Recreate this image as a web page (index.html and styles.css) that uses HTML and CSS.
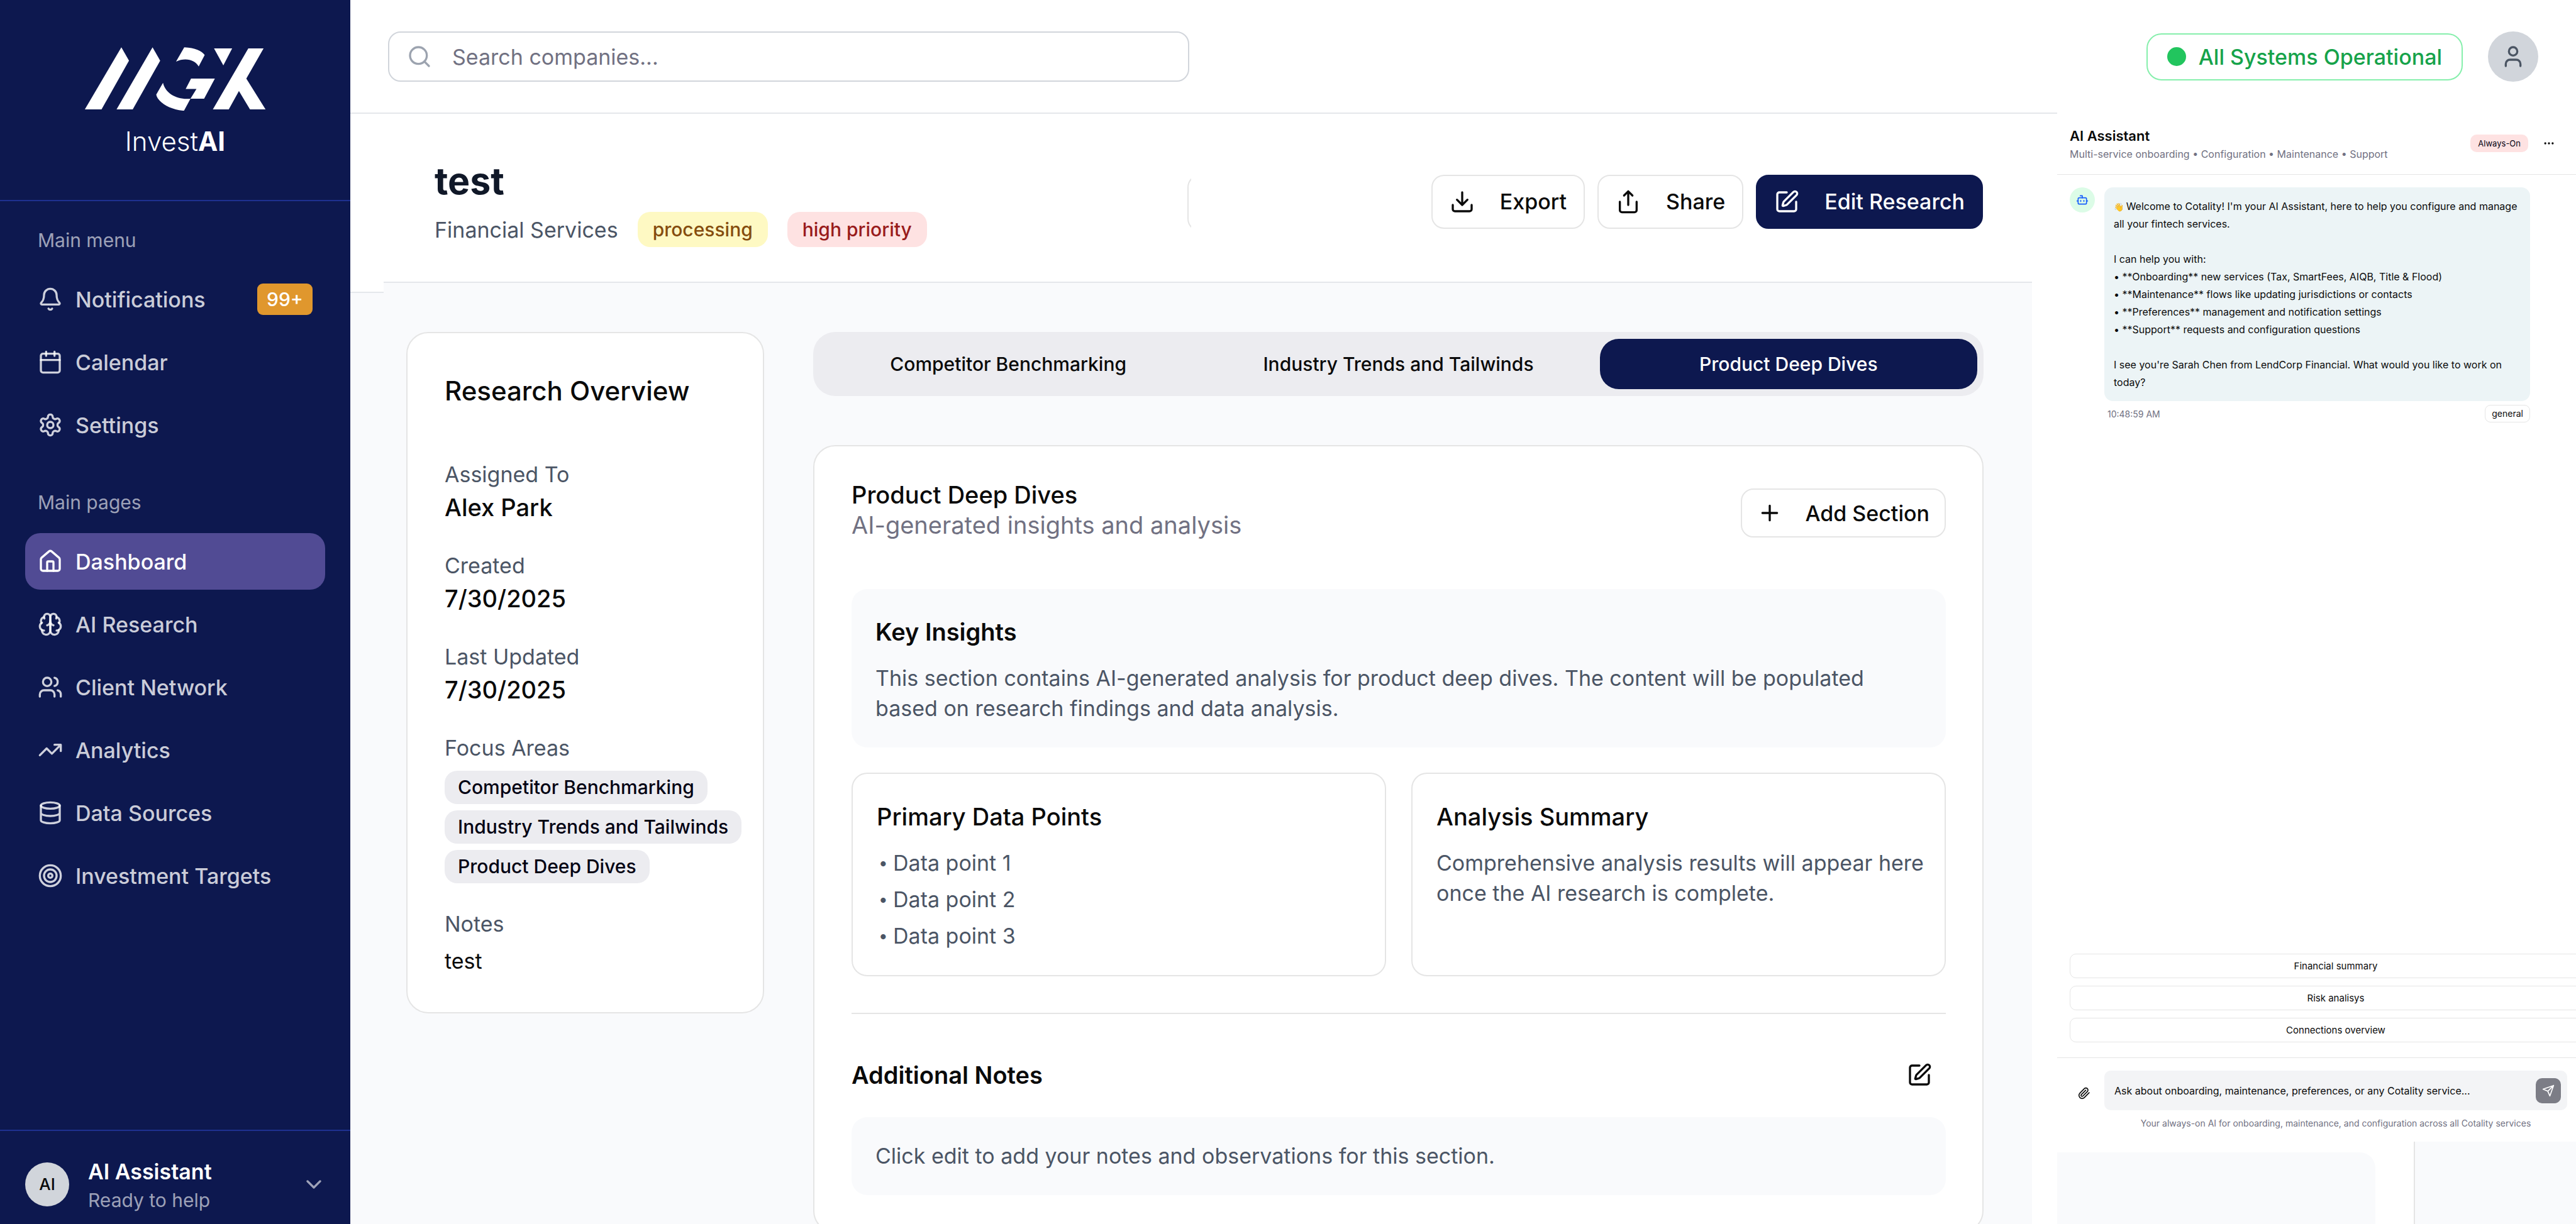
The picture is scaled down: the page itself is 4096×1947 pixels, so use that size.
FILE: index.html
```html
<!DOCTYPE html>
<html lang="en">
<head>
<meta charset="utf-8">
<title>InvestAI – Research</title>
<link rel="stylesheet" href="styles.css">
</head>
<body>
<svg class="sprite" aria-hidden="true">
  <symbol id="bell" viewBox="0 0 24 24"><path d="M10.268 21a2 2 0 0 0 3.464 0"/><path d="M3.262 15.326A1 1 0 0 0 4 17h16a1 1 0 0 0 .74-1.673C19.41 13.956 18 12.499 18 8A6 6 0 0 0 6 8c0 4.499-1.411 5.956-2.738 7.326"/></symbol>
  <symbol id="calendar" viewBox="0 0 24 24"><path d="M8 2v4M16 2v4M3 10h18"/><rect width="18" height="18" x="3" y="4" rx="2"/></symbol>
  <symbol id="settings" viewBox="0 0 24 24"><path d="M12.22 2h-.44a2 2 0 0 0-2 2v.18a2 2 0 0 1-1 1.73l-.43.25a2 2 0 0 1-2 0l-.15-.08a2 2 0 0 0-2.73.73l-.22.38a2 2 0 0 0 .73 2.73l.15.1a2 2 0 0 1 1 1.72v.51a2 2 0 0 1-1 1.74l-.15.09a2 2 0 0 0-.73 2.73l.22.38a2 2 0 0 0 2.73.73l.15-.08a2 2 0 0 1 2 0l.43.25a2 2 0 0 1 1 1.73V20a2 2 0 0 0 2 2h.44a2 2 0 0 0 2-2v-.18a2 2 0 0 1 1-1.73l.43-.25a2 2 0 0 1 2 0l.15.08a2 2 0 0 0 2.73-.73l.22-.39a2 2 0 0 0-.73-2.73l-.15-.08a2 2 0 0 1-1-1.74v-.5a2 2 0 0 1 1-1.74l.15-.09a2 2 0 0 0 .73-2.73l-.22-.38a2 2 0 0 0-2.73-.73l-.15.08a2 2 0 0 1-2 0l-.43-.25a2 2 0 0 1-1-1.73V4a2 2 0 0 0-2-2z"/><circle cx="12" cy="12" r="3"/></symbol>
  <symbol id="house" viewBox="0 0 24 24"><path d="M15 21v-8a1 1 0 0 0-1-1h-4a1 1 0 0 0-1 1v8"/><path d="M3 10a2 2 0 0 1 .709-1.528l7-5.999a2 2 0 0 1 2.582 0l7 5.999A2 2 0 0 1 21 10v9a2 2 0 0 1-2 2H5a2 2 0 0 1-2-2z"/></symbol>
  <symbol id="brain" viewBox="0 0 24 24"><path d="M12 5a3 3 0 1 0-5.997.125 4 4 0 0 0-2.526 5.77 4 4 0 0 0 .556 6.588A4 4 0 1 0 12 18Z"/><path d="M12 5a3 3 0 1 1 5.997.125 4 4 0 0 1 2.526 5.77 4 4 0 0 1-.556 6.588A4 4 0 1 1 12 18Z"/><path d="M15 13a4.5 4.5 0 0 1-3-4 4.5 4.5 0 0 1-3 4M17.599 6.5a3 3 0 0 0 .399-1.375M6.003 5.125A3 3 0 0 0 6.401 6.5M3.477 10.896a4 4 0 0 1 .585-.396M19.938 10.5a4 4 0 0 1 .585.396M6 18a4 4 0 0 1-1.967-.516M19.967 17.484A4 4 0 0 1 18 18"/></symbol>
  <symbol id="users" viewBox="0 0 24 24"><path d="M16 21v-2a4 4 0 0 0-4-4H6a4 4 0 0 0-4 4v2"/><circle cx="9" cy="7" r="4"/><path d="M22 21v-2a4 4 0 0 0-3-3.87M16 3.13a4 4 0 0 1 0 7.75"/></symbol>
  <symbol id="trend" viewBox="0 0 24 24"><path d="M22 7l-8.5 8.5-5-5L2 17M16 7h6v6"/></symbol>
  <symbol id="database" viewBox="0 0 24 24"><ellipse cx="12" cy="5" rx="9" ry="3"/><path d="M3 5V19A9 3 0 0 0 21 19V5M3 12A9 3 0 0 0 21 12"/></symbol>
  <symbol id="target" viewBox="0 0 24 24"><circle cx="12" cy="12" r="10"/><circle cx="12" cy="12" r="6"/><circle cx="12" cy="12" r="2"/></symbol>
  <symbol id="chevron" viewBox="0 0 24 24"><path d="m6 9 6 6 6-6"/></symbol>
  <symbol id="search" viewBox="0 0 24 24"><circle cx="11" cy="11" r="8"/><path d="m21 21-4.3-4.3"/></symbol>
  <symbol id="user" viewBox="0 0 24 24"><path d="M19 21v-2a4 4 0 0 0-4-4H9a4 4 0 0 0-4 4v2"/><circle cx="12" cy="7" r="4"/></symbol>
  <symbol id="download" viewBox="0 0 24 24"><path d="M21 15v4a2 2 0 0 1-2 2H5a2 2 0 0 1-2-2v-4M7 10l5 5 5-5M12 15V3"/></symbol>
  <symbol id="share" viewBox="0 0 24 24"><path d="M4 12v8a2 2 0 0 0 2 2h12a2 2 0 0 0 2-2v-8M16 6l-4-4-4 4M12 2v13"/></symbol>
  <symbol id="pen" viewBox="0 0 24 24"><path d="M12 3H5a2 2 0 0 0-2 2v14a2 2 0 0 0 2 2h14a2 2 0 0 0 2-2v-7"/><path d="M18.375 2.625a1 1 0 0 1 3 3l-9.013 9.014a2 2 0 0 1-.853.505l-2.873.84a.5.5 0 0 1-.62-.62l.84-2.873a2 2 0 0 1 .506-.852z"/></symbol>
  <symbol id="plus" viewBox="0 0 24 24"><path d="M5 12h14M12 5v14"/></symbol>
  <symbol id="more" viewBox="0 0 24 24"><circle cx="12" cy="12" r="1"/><circle cx="19" cy="12" r="1"/><circle cx="5" cy="12" r="1"/></symbol>
  <symbol id="bot" viewBox="0 0 24 24"><path d="M12 8V4H8"/><rect width="16" height="12" x="4" y="8" rx="2"/><path d="M2 14h2M20 14h2M15 13v2M9 13v2"/></symbol>
  <symbol id="clip" viewBox="0 0 24 24"><path d="m21.44 11.05-9.19 9.19a6 6 0 0 1-8.49-8.49l8.57-8.57A4 4 0 1 1 18 8.84l-8.59 8.57a2 2 0 0 1-2.83-2.83l8.49-8.48"/></symbol>
  <symbol id="send" viewBox="0 0 24 24"><path d="m22 2-7 20-4-9-9-4ZM22 2 11 13"/></symbol>
</svg>

<div class="app">
  <aside class="sidebar">
    <div class="brand">
      <svg class="brand-mark" viewBox="188 105 407 143" role="img" aria-label="MGX">
        <path d="M270.4 105.4 287.6 135.3 225.8 245H188.2Z"/>
        <path d="M340.6 105.4 357.8 135.3 296 245H259.6Z"/>
        <path d="M412 105.4C436 106 452 114 458 122.8L444.5 148.6C436 133 414 128 393.5 137.5Z"/>
        <path d="M364.2 185.3C370 210 396 224 426 221L411.4 248.2C378 246 352 228 348.9 212Z"/>
        <path d="M427.3 175.9H480.9L456.7 221H426L439.5 199H415.2Z"/>
        <path d="M479 108H519.8L500 146Z"/>
        <path d="M556.2 108H590.6L551.7 175.9 595 245H560L535.1 203.6 512.2 245H476.4Z"/>
      </svg>
      <div class="brand-name">Invest<b>AI</b></div>
    </div>
    <nav class="nav">
      <h2 class="nav-label">Main menu</h2>
      <a class="nav-item" href="#"><svg class="icon"><use href="#bell"/></svg>Notifications<span class="count">99+</span></a>
      <a class="nav-item" href="#"><svg class="icon"><use href="#calendar"/></svg>Calendar</a>
      <a class="nav-item" href="#"><svg class="icon"><use href="#settings"/></svg>Settings</a>
      <h2 class="nav-label nav-label-next">Main pages</h2>
      <a class="nav-item nav-active" href="#"><svg class="icon"><use href="#house"/></svg>Dashboard</a>
      <a class="nav-item" href="#"><svg class="icon"><use href="#brain"/></svg>AI Research</a>
      <a class="nav-item" href="#"><svg class="icon"><use href="#users"/></svg>Client Network</a>
      <a class="nav-item" href="#"><svg class="icon"><use href="#trend"/></svg>Analytics</a>
      <a class="nav-item" href="#"><svg class="icon"><use href="#database"/></svg>Data Sources</a>
      <a class="nav-item" href="#"><svg class="icon"><use href="#target"/></svg>Investment Targets</a>
    </nav>
    <div class="account">
      <span class="account-avatar">AI</span>
      <div class="account-text"><div class="account-name">AI Assistant</div><div class="account-status">Ready to help</div></div>
      <svg class="icon account-chevron"><use href="#chevron"/></svg>
    </div>
  </aside>

  <div class="content">
    <header class="topbar">
      <label class="search"><svg class="icon"><use href="#search"/></svg><input type="search" placeholder="Search companies..." aria-label="Search companies"></label>
      <div class="status"><span class="status-dot"></span>All Systems Operational</div>
      <button class="profile" aria-label="Profile"><svg class="icon"><use href="#user"/></svg></button>
    </header>

    <div class="workspace">
      <div class="gutter"><div class="gutter-head"></div></div>

      <main class="page">
        <header class="page-head">
          <div class="page-intro">
            <h1 class="page-title">test</h1>
            <div class="page-meta"><span>Financial Services</span><span class="tag tag-processing">processing</span><span class="tag tag-high">high priority</span></div>
          </div>
          <div class="sliver"></div>
          <div class="page-actions">
            <button class="button"><svg class="icon"><use href="#download"/></svg>Export</button>
            <button class="button"><svg class="icon"><use href="#share"/></svg>Share</button>
            <button class="button button-primary"><svg class="icon"><use href="#pen"/></svg>Edit Research</button>
          </div>
        </header>

        <div class="page-body">
          <section class="overview">
            <h2 class="overview-title">Research Overview</h2>
            <dl class="facts">
              <div><dt>Assigned To</dt><dd>Alex Park</dd></div>
              <div><dt>Created</dt><dd>7/30/2025</dd></div>
              <div><dt>Last Updated</dt><dd>7/30/2025</dd></div>
              <div><dt>Focus Areas</dt><dd class="focus"><span class="chip">Competitor Benchmarking</span><span class="chip">Industry Trends and Tailwinds</span><span class="chip">Product Deep Dives</span></dd></div>
              <div><dt>Notes</dt><dd class="fact-note">test</dd></div>
            </dl>
          </section>

          <div class="detail">
            <div class="tabs" role="tablist">
              <button class="tab" role="tab">Competitor Benchmarking</button>
              <button class="tab" role="tab">Industry Trends and Tailwinds</button>
              <button class="tab tab-active" role="tab" aria-selected="true">Product Deep Dives</button>
            </div>

            <section class="report">
              <div class="report-head">
                <div class="report-heading"><h2 class="report-title">Product Deep Dives</h2><p class="report-sub">AI-generated insights and analysis</p></div>
                <button class="button button-small"><svg class="icon"><use href="#plus"/></svg>Add Section</button>
              </div>
              <div class="panel">
                <h3 class="heading heading-strong">Key Insights</h3>
                <p class="copy">This section contains AI-generated analysis for product deep dives. The content will be populated based on research findings and data analysis.</p>
              </div>
              <div class="pair">
                <div class="box">
                  <h3 class="heading">Primary Data Points</h3>
                  <ul class="points">
                    <li><span class="bullet">•</span>Data point 1</li>
                    <li><span class="bullet">•</span>Data point 2</li>
                    <li><span class="bullet">•</span>Data point 3</li>
                  </ul>
                </div>
                <div class="box">
                  <h3 class="heading">Analysis Summary</h3>
                  <p class="copy">Comprehensive analysis results will appear here once the AI research is complete.</p>
                </div>
              </div>
              <hr class="rule">
              <div class="notes-head"><h3 class="heading heading-strong">Additional Notes</h3><button class="icon-button" aria-label="Edit notes"><svg class="icon"><use href="#pen"/></svg></button></div>
              <div class="panel"><p class="copy">Click edit to add your notes and observations for this section.</p></div>
            </section>
          </div>
        </div>
      </main>

      <aside class="dock">
        <section class="chat">
          <header class="chat-head">
            <div class="chat-heading"><h2 class="chat-title">AI Assistant</h2><p class="chat-sub">Multi-service onboarding • Configuration • Maintenance • Support</p></div>
            <span class="chat-badge">Always-On</span>
            <button class="chat-more" aria-label="More"><svg class="icon-small"><use href="#more"/></svg></button>
          </header>
          <div class="chat-log">
            <span class="bot"><svg class="icon-small"><use href="#bot"/></svg></span>
            <div class="message">
              <p class="bubble"><span class="emoji">👋 </span>Welcome to Cotality! I'm your AI Assistant, here to help you configure and manage<br>all your fintech services.<br><br>I can help you with:<br>• **Onboarding** new services (Tax, SmartFees, AIQB, Title &amp; Flood)<br>• **Maintenance** flows like updating jurisdictions or contacts<br>• **Preferences** management and notification settings<br>• **Support** requests and configuration questions<br><br>I see you're Sarah Chen from LendCorp Financial. What would you like to work on<br>today?</p>
              <div class="message-meta"><time>10:48:59 AM</time><span class="topic">general</span></div>
            </div>
          </div>
          <div class="prompts">
            <button class="prompt">Financial summary</button>
            <button class="prompt">Risk analisys</button>
            <button class="prompt">Connections overview</button>
          </div>
          <footer class="composer">
            <div class="composer-row">
              <button class="attach" aria-label="Attach file"><svg class="icon-small"><use href="#clip"/></svg></button>
              <div class="composer-field">
                <input type="text" placeholder="Ask about onboarding, maintenance, preferences, or any Cotality service..." aria-label="Message">
                <button class="send" aria-label="Send"><svg class="icon-small"><use href="#send"/></svg></button>
              </div>
            </div>
            <p class="composer-note">Your always-on AI for onboarding, maintenance, and configuration across all Cotality services</p>
          </footer>
        </section>
        <div class="dock-rest"><div class="rest-card"></div><div class="rest-side"></div></div>
      </aside>
    </div>
  </div>
</div>
</body>
</html>
```
FILE: styles.css
```css
* { box-sizing: border-box; margin: 0; padding: 0; }

:root {
  --navy: #0d184f;
  --wash: #f9fafc;
  --ink: #0a0a0a;
  --slate: #4b5565;
  --muted: #717182;
  --line: #e5e5e5;
  --line-cool: #e5e7eb;
}

body {
  font-family: Inter, "Liberation Sans", sans-serif;
  font-size: 34px;
  color: var(--ink);
  background: #fff;
}

button, input { font: inherit; color: inherit; border: 0; background: none; outline: 0; }
button { cursor: pointer; }
h1, h2, h3 { font-weight: 500; }
a { color: inherit; text-decoration: none; }

.sprite { display: none; }
.icon, .icon-small { fill: none; stroke: currentColor; stroke-width: 2; stroke-linecap: round; stroke-linejoin: round; flex: none; display: block; }
.icon { width: 40px; height: 40px; }
.icon-small { width: 20px; height: 20px; }

.app { display: flex; height: 100vh; overflow: hidden; }

/* Sidebar */
.sidebar { flex: none; width: 557px; display: flex; flex-direction: column; background: var(--navy); color: #fff; }
.brand { display: flex; flex-direction: column; align-items: center; gap: 24px; padding: 75px 0 68px; border-bottom: 2px solid #1f3190; }
.brand-mark { width: 289px; height: 101px; fill: #fff; display: block; }
.brand-name { font-size: 42px; line-height: 50px; font-weight: 300; }
.brand-name b { font-weight: 700; }
.nav { flex: 1; display: flex; flex-direction: column; gap: 10px; padding: 41px 40px 0; }
.nav-label { padding: 0 20px; margin-bottom: 18px; font-size: 30px; line-height: 42px; font-weight: 400; color: rgb(255 255 255 / .6); }
.nav-label-next { margin-top: 47px; }
.nav-item { display: flex; align-items: center; gap: 20px; height: 90px; padding: 0 20px; border-radius: 24px; font-weight: 500; color: rgb(255 255 255 / .8); }
.nav-active { background: #514b94; color: #fff; }
.count { margin-left: auto; width: 88px; height: 50px; border-radius: 9px; background: #e0972d; color: #fff; font-size: 30px; line-height: 50px; text-align: center; }
.account { display: flex; align-items: center; padding: 40px 38px 18px 40px; border-top: 2px solid #1f3190; }
.account-avatar { width: 70px; height: 70px; border-radius: 50%; background: #d1d5db; color: var(--ink); font-size: 26px; line-height: 70px; font-weight: 500; text-align: center; }
.account-text { margin-left: 30px; }
.account-name { line-height: 50px; font-weight: 600; }
.account-status { font-size: 30px; line-height: 40px; color: rgb(255 255 255 / .6); }
.account-chevron { margin-left: auto; color: rgb(255 255 255 / .6); }

/* Top bar */
.content { flex: 1; min-width: 0; display: flex; flex-direction: column; }
.topbar { flex: none; display: flex; align-items: center; padding: 50px 60px 49px; border-bottom: 2px solid var(--line-cool); }
.search { display: flex; align-items: center; gap: 32px; flex: 0 1 1274px; height: 80px; padding: 0 28px; border: 2px solid #d1d5db; border-radius: 20px; color: #9ca3af; }
.search input { flex: 1; min-width: 0; }
.search input::placeholder { color: var(--muted); opacity: 1; }
.status { display: flex; align-items: center; gap: 20px; height: 75px; margin-left: auto; padding: 0 31px; border: 2px solid #86efac; border-radius: 24px; color: #16a34a; font-weight: 500; }
.status-dot { width: 30px; height: 30px; border-radius: 50%; background: #22c55e; }
.profile { display: flex; align-items: center; justify-content: center; width: 80px; height: 80px; margin-left: 40px; border-radius: 50%; background: #d1d5db; color: #4b5563; }

/* Workspace */
.workspace { flex: 1; min-height: 0; display: flex; }
.gutter { flex: none; width: 53px; background: var(--wash); }
.gutter-head { height: 285px; background: #fff; border-bottom: 2px solid var(--line-cool); }
.page { flex: 1; min-width: 0; overflow: hidden; background: var(--wash); }
.page-head { display: flex; align-items: center; padding: 67px 78px 55px 81px; background: #fff; border-bottom: 2px solid var(--line-cool); }
.page-intro { flex: 0 0 1197px; }
.page-title { font-size: 59px; line-height: 80px; font-weight: 700; color: #101828; }
.page-meta { display: flex; align-items: center; gap: 31px; margin-top: 9px; color: var(--slate); }
.tag { padding: 0 24px; border-radius: 20px; font-size: 30px; line-height: 56px; font-weight: 500; }
.tag-processing { background: #fef9c3; color: #854d0e; }
.tag-high { background: #fee2e2; color: #991b1b; }
.sliver { width: 6px; height: 86px; overflow: hidden; }
.sliver::before { content: ""; display: block; width: 80px; height: 86px; border: 2px solid var(--line); border-radius: 20px; }
.page-actions { display: flex; gap: 20px; margin-left: auto; }
.button { display: flex; align-items: center; gap: 40px; height: 86px; padding: 0 27px; border: 2px solid var(--line); border-radius: 20px; background: #fff; font-weight: 500; white-space: nowrap; }
.button-primary { border-color: var(--navy); background: var(--navy); color: #fff; }
.button-small { gap: 36px; height: 78px; padding: 0 24px; }

.page-body { display: flex; align-items: flex-start; gap: 78px; padding: 78px 77px 0 36px; }

/* Overview card */
.overview { flex: none; width: 569px; padding: 60px 30px 56px 59px; border: 2px solid var(--line); border-radius: 35px; background: #fff; }
.overview-title { font-size: 42px; line-height: 64px; }
.facts { display: flex; flex-direction: column; gap: 40px; margin-top: 76px; }
.facts dt { line-height: 49px; color: var(--slate); }
.facts dd { font-size: 38px; line-height: 56px; font-weight: 500; }
.facts .focus { display: flex; flex-direction: column; align-items: flex-start; gap: 10px; margin-top: 12px; }
.chip { padding: 0 21px; border-radius: 20px; background: #ececf0; color: #030213; font-size: 30px; line-height: 53px; white-space: nowrap; }
.facts .fact-note { margin-top: 10px; font-size: 34px; line-height: 50px; font-weight: 400; }

/* Tabs */
.detail { flex: 1; min-width: 0; display: flex; flex-direction: column; gap: 78px; }
.tabs { display: flex; gap: 20px; padding: 11px 10px; border-radius: 35px; background: #ececf0; }
.tab { flex: 1; height: 80px; border-radius: 30px; font-size: 30px; font-weight: 500; }
.tab-active { background: var(--navy); color: #fff; }

/* Report card */
.report { padding: 53px 58px 58px 59px; border: 2px solid var(--line); border-radius: 35px; background: #fff; }
.report-head { display: flex; align-items: center; justify-content: space-between; margin-bottom: 68px; }
.report-heading { padding-bottom: 10px; font-size: 38px; line-height: 48px; }
.report-title { font-size: 38px; }
.report-sub { color: var(--muted); }
.panel { padding: 38px; border-radius: 25px; background: var(--wash); }
.heading { font-size: 38px; line-height: 60px; }
.heading-strong { font-weight: 600; }
.copy { line-height: 48px; color: var(--slate); }
.heading + .copy, .points { margin-top: 20px; }
.pair { display: grid; grid-template-columns: 1fr 1fr; gap: 40px; margin-top: 40px; }
.box { padding: 38px 24px 38px 38px; border: 2px solid var(--line); border-radius: 25px; }
.points { display: flex; flex-direction: column; gap: 10px; list-style: none; line-height: 48px; color: var(--slate); }
.points li { display: flex; }
.bullet { width: 26px; padding-left: 3px; font-size: 26px; }
.rule { height: 2px; margin: 58px 0; border: 0; background: var(--line); }
.notes-head { display: flex; align-items: center; justify-content: space-between; margin-bottom: 28px; }
.icon-button { padding: 19px 22px; }

/* Assistant dock */
.dock { flex: none; width: 865px; display: flex; flex-direction: column; padding-left: 40px; position: relative; z-index: 1; }
.chat { flex: 1; width: 886px; margin-top: -3px; display: flex; flex-direction: column; background: #fff; font-size: 16px; }
.chat-head { display: flex; align-items: center; height: 100px; padding: 0 94px 0 20px; border-bottom: 1px solid var(--line); }
.chat-heading { padding-top: 5px; }
.chat-title { font-size: 22px; line-height: 30px; font-weight: 600; }
.chat-sub { line-height: 28px; color: var(--muted); }
.chat-badge { margin-left: auto; padding: 0 12px; border-radius: 10px; background: #fee2e2; color: #030213; font-size: 13px; line-height: 28px; }
.chat-more { margin-left: 23px; }
.chat-log { flex: 1; display: flex; align-items: flex-start; gap: 15px; padding: 20px; }
.bot { display: flex; align-items: center; justify-content: center; width: 40px; height: 40px; border-radius: 50%; background: #dcfce7; color: #155dfc; }
.message { width: 677px; }
.bubble { padding: 16px 15px; border-radius: 14px; background: #ecf4f6; line-height: 28px; white-space: nowrap; }
.emoji { font-size: 13px; line-height: 1; }
.message-meta { display: flex; align-items: center; justify-content: space-between; padding-left: 5px; margin-top: 6px; font-size: 14px; color: var(--muted); }
.topic { padding: 0 10px; border: 1px solid var(--line); border-radius: 9px; color: var(--ink); line-height: 26px; }
.prompts { display: flex; flex-direction: column; gap: 12px; padding: 0 20px 24px; }
.prompt { height: 39px; border: 1px solid var(--line); border-radius: 10px; font-size: 15px; }
.composer { padding: 20px 20px 18px; border-top: 1px solid var(--line); }
.composer-row { display: flex; align-items: center; gap: 10px; padding-right: 55px; }
.attach { display: flex; align-items: center; justify-content: center; width: 45px; padding-top: 8px; }
.composer-field { flex: 1; display: flex; align-items: center; height: 63px; padding: 0 10px 0 16px; border-radius: 10px; background: #f3f4f6; }
.composer-field input { flex: 1; min-width: 0; }
.composer-field input::placeholder { color: var(--ink); opacity: 1; }
.send { display: flex; align-items: center; justify-content: center; width: 40px; height: 40px; border-radius: 10px; background: #7c7d86; color: #fff; }
.composer-note { margin-top: 10px; font-size: 14px; line-height: 22px; text-align: center; color: var(--muted); }

.dock-rest { display: flex; align-items: stretch; gap: 61px; height: 131px; }
.rest-card { width: 506px; margin-top: 17px; border-top-right-radius: 25px; background: var(--wash); }
.rest-side { flex: 1; border-left: 2px solid var(--line); background: var(--wash); }
```
